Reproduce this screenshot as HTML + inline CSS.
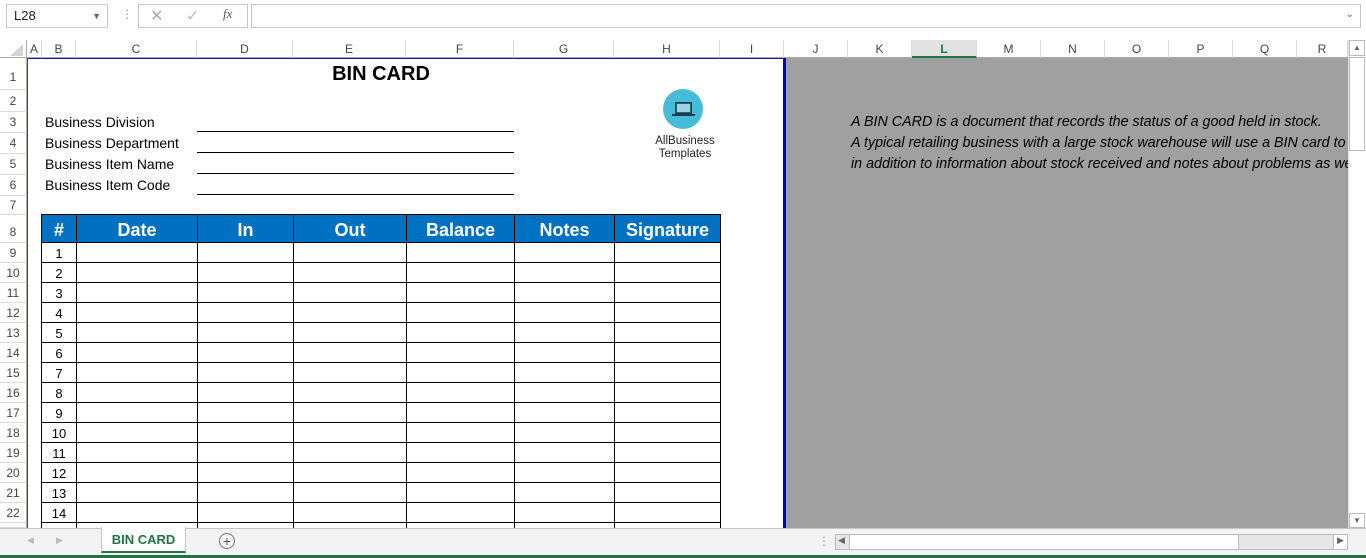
<!DOCTYPE html>
<html><head><meta charset="utf-8"><style>
*{margin:0;padding:0;box-sizing:border-box}
body{width:1366px;height:558px;overflow:hidden;background:#fff;font-family:"Liberation Sans",Calibri,sans-serif;position:relative}
.a{position:absolute}
.ch{position:absolute;top:40px;height:18px;border-right:1px solid #dadada;font-size:12px;color:#444;text-align:center;line-height:18px;background:#fff;border-bottom:1px solid #ababab}
.rh{position:absolute;left:0;width:27px;border-bottom:1px solid #dadada;font-size:12px;color:#444;text-align:center;background:#fff;border-right:1px solid #ababab}
table.g{position:absolute;left:41px;top:214px;border-collapse:collapse;table-layout:fixed}
table.g td{border:1px solid #000;height:20px;font-size:13px;text-align:center;color:#000;padding:2px 0 0 0;line-height:17px}
table.g tr.h td{background:#0070c0;color:#fff;font-weight:bold;font-size:18px;height:28px;padding-top:3px}
.lab{position:absolute;left:45px;font-size:14px;color:#000}
.ul{position:absolute;left:197px;width:317px;height:1px;background:#000}
.it{position:absolute;left:851px;font-size:14.3px;font-style:italic;color:#000;white-space:nowrap}
</style></head><body>
<div class="a" style="left:0;top:0;width:1366px;height:36px;background:#fff"></div>
<div class="a" style="left:6px;top:4px;width:102px;height:24px;border:1px solid #c6c6c6;font-size:13px;line-height:22px;padding-left:7px;color:#222">L28<span class="a" style="right:6px;top:0;font-size:9px;color:#666">▼</span></div>
<div class="a" style="left:121px;top:7px;color:#999;font-size:12px">⋮</div>
<div class="a" style="left:138px;top:4px;width:110px;height:24px;border:1px solid #c6c6c6"></div>
<div class="a" style="left:150px;top:6px;color:#aaa;font-size:16px">✕</div>
<div class="a" style="left:186px;top:6px;color:#bbb;font-size:16px">✓</div>
<div class="a" style="left:223px;top:6px;color:#555;font-size:13px;font-style:italic;font-family:'Liberation Serif',serif">fx</div>
<div class="a" style="left:251px;top:4px;width:1110px;height:24px;border:1px solid #c6c6c6"><span class="a" style="right:6px;top:4px;font-size:10px;color:#666">⌄</span></div>
<div class="a" style="left:0;top:40px;width:27px;height:18px;background:#fff;border-right:1px solid #ababab;border-bottom:1px solid #ababab"></div>
<div class="a" style="left:10px;top:44px;width:0;height:0;border-left:13px solid transparent;border-bottom:12px solid #d4d4d4"></div>
<div class="ch" style="left:27px;width:15px">A</div>
<div class="ch" style="left:42px;width:34px">B</div>
<div class="ch" style="left:76px;width:121px">C</div>
<div class="ch" style="left:197px;width:96px">D</div>
<div class="ch" style="left:293px;width:113px">E</div>
<div class="ch" style="left:406px;width:108px">F</div>
<div class="ch" style="left:514px;width:100px">G</div>
<div class="ch" style="left:614px;width:106px">H</div>
<div class="ch" style="left:720px;width:64px">I</div>
<div class="ch" style="left:784px;width:64px">J</div>
<div class="ch" style="left:848px;width:64px">K</div>
<div class="ch" style="left:912px;width:65px;background:#e1e1e1;color:#217346;font-weight:bold;border-bottom:2px solid #217346">L</div>
<div class="ch" style="left:977px;width:64px">M</div>
<div class="ch" style="left:1041px;width:64px">N</div>
<div class="ch" style="left:1105px;width:64px">O</div>
<div class="ch" style="left:1169px;width:64px">P</div>
<div class="ch" style="left:1233px;width:64px">Q</div>
<div class="ch" style="left:1297px;width:51px">R</div>
<div class="rh" style="top:58px;height:32px;line-height:38px">1</div>
<div class="rh" style="top:90px;height:22px;line-height:22px">2</div>
<div class="rh" style="top:112px;height:21px;line-height:21px">3</div>
<div class="rh" style="top:133px;height:21px;line-height:21px">4</div>
<div class="rh" style="top:154px;height:21px;line-height:21px">5</div>
<div class="rh" style="top:175px;height:21px;line-height:21px">6</div>
<div class="rh" style="top:196px;height:19px;line-height:19px">7</div>
<div class="rh" style="top:215px;height:28px;line-height:34px">8</div>
<div class="rh" style="top:243px;height:20px;line-height:20px">9</div>
<div class="rh" style="top:263px;height:20px;line-height:20px">10</div>
<div class="rh" style="top:283px;height:20px;line-height:20px">11</div>
<div class="rh" style="top:303px;height:20px;line-height:20px">12</div>
<div class="rh" style="top:323px;height:20px;line-height:20px">13</div>
<div class="rh" style="top:343px;height:20px;line-height:20px">14</div>
<div class="rh" style="top:363px;height:20px;line-height:20px">15</div>
<div class="rh" style="top:383px;height:20px;line-height:20px">16</div>
<div class="rh" style="top:403px;height:20px;line-height:20px">17</div>
<div class="rh" style="top:423px;height:20px;line-height:20px">18</div>
<div class="rh" style="top:443px;height:20px;line-height:20px">19</div>
<div class="rh" style="top:463px;height:20px;line-height:20px">20</div>
<div class="rh" style="top:483px;height:20px;line-height:20px">21</div>
<div class="rh" style="top:503px;height:20px;line-height:20px">22</div>
<div class="rh" style="top:523px;height:5px"></div>
<div class="a" style="left:27px;top:58px;width:758px;height:1px;background:#1a1aa0"></div>
<div class="a" style="left:27px;top:58px;width:1px;height:470px;background:#3a3ab8"></div>
<div class="a" style="left:783px;top:58px;width:3px;height:470px;background:#0000c8"></div>
<div class="a" style="left:786px;top:58px;width:562px;height:470px;background:#a0a0a0"></div>
<div class="a" style="left:293px;top:63px;width:176px;text-align:center;font-size:20px;font-weight:bold">BIN CARD</div>
<div class="lab" style="top:114px">Business Division</div>
<div class="lab" style="top:135px">Business Department</div>
<div class="lab" style="top:156px">Business Item Name</div>
<div class="lab" style="top:177px">Business Item Code</div>
<div class="ul" style="top:131px"></div>
<div class="ul" style="top:152px"></div>
<div class="ul" style="top:173px"></div>
<div class="ul" style="top:194px"></div>
<div class="a" style="left:663px;top:89px;width:40px;height:40px;border-radius:50%;background:#47bcd8;overflow:hidden">
<div class="a" style="left:12px;top:13px;width:17px;height:12px;background:#2b5d78;border:1px solid #1d3d52"></div>
<div class="a" style="left:14px;top:15px;width:13px;height:8px;background:#9bd3e4"></div>
<div class="a" style="left:9px;top:25px;width:23px;height:2px;background:#1d3d52"></div>
</div>
<div class="a" style="left:640px;top:135px;width:90px;text-align:center;font-size:11.5px;line-height:13px;color:#222">AllBusiness<br>Templates</div>
<div class="a" style="left:0;top:0;width:1366px;height:528px;overflow:hidden;pointer-events:none">
<table class="g">
<colgroup><col style="width:35px"><col style="width:121px"><col style="width:96px"><col style="width:113px"><col style="width:108px"><col style="width:100px"><col style="width:106px"></colgroup>
<tr class="h"><td>#</td><td>Date</td><td>In</td><td>Out</td><td>Balance</td><td>Notes</td><td>Signature</td></tr>
<tr><td>1</td><td></td><td></td><td></td><td></td><td></td><td></td></tr>
<tr><td>2</td><td></td><td></td><td></td><td></td><td></td><td></td></tr>
<tr><td>3</td><td></td><td></td><td></td><td></td><td></td><td></td></tr>
<tr><td>4</td><td></td><td></td><td></td><td></td><td></td><td></td></tr>
<tr><td>5</td><td></td><td></td><td></td><td></td><td></td><td></td></tr>
<tr><td>6</td><td></td><td></td><td></td><td></td><td></td><td></td></tr>
<tr><td>7</td><td></td><td></td><td></td><td></td><td></td><td></td></tr>
<tr><td>8</td><td></td><td></td><td></td><td></td><td></td><td></td></tr>
<tr><td>9</td><td></td><td></td><td></td><td></td><td></td><td></td></tr>
<tr><td>10</td><td></td><td></td><td></td><td></td><td></td><td></td></tr>
<tr><td>11</td><td></td><td></td><td></td><td></td><td></td><td></td></tr>
<tr><td>12</td><td></td><td></td><td></td><td></td><td></td><td></td></tr>
<tr><td>13</td><td></td><td></td><td></td><td></td><td></td><td></td></tr>
<tr><td>14</td><td></td><td></td><td></td><td></td><td></td><td></td></tr>
<tr><td>15</td><td></td><td></td><td></td><td></td><td></td><td></td></tr>
</table>
</div>
<div class="a" style="left:786px;top:58px;width:562px;height:470px;overflow:hidden">
<div class="it" style="left:65px;top:56px">A BIN CARD is a document that records the status of a good held in stock.</div>
<div class="it" style="left:65px;top:77px">A typical retailing business with a large stock warehouse will use a BIN card to record</div>
<div class="it" style="left:65px;top:98px">in addition to information about stock received and notes about problems as well.</div>
</div>
<div class="a" style="left:1348px;top:40px;width:18px;height:488px;background:#fff;border-left:1px solid #e0e0e0"></div>
<div class="a" style="left:1349px;top:40px;width:16px;height:16px;border:1px solid #bbb;font-size:8px;color:#666;text-align:center;line-height:14px">▲</div>
<div class="a" style="left:1349px;top:57px;width:16px;height:94px;border:1px solid #bbb;background:#fff"></div>
<div class="a" style="left:1349px;top:513px;width:16px;height:15px;border:1px solid #bbb;font-size:8px;color:#666;text-align:center;line-height:13px">▼</div>
<div class="a" style="left:0;top:528px;width:1366px;height:27px;background:#f3f3f3;border-top:1px solid #c6c6c6"></div>
<div class="a" style="left:27px;top:535px;font-size:9px;color:#bbb">◀</div>
<div class="a" style="left:56px;top:535px;font-size:9px;color:#bbb">▶</div>
<div class="a" style="left:101px;top:527px;width:85px;height:26px;background:#fff;border:1px solid #c6c6c6;border-top:none;border-bottom:2px solid #217346;text-align:center;font-size:13px;font-weight:bold;color:#217346;line-height:26px">BIN CARD</div>
<div class="a" style="left:219px;top:533px;width:16px;height:16px;border:1px solid #777;border-radius:50%;text-align:center;line-height:14px;font-size:14px;color:#555">+</div>
<div class="a" style="left:818px;top:534px;color:#999;font-size:12px">⋮</div>
<div class="a" style="left:835px;top:534px;width:513px;height:16px;background:#e6e6e6;border:1px solid #bbb"></div>
<div class="a" style="left:849px;top:535px;width:390px;height:14px;background:#fff;border-right:1px solid #bbb;border-left:1px solid #bbb"></div>
<div class="a" style="left:838px;top:535px;font-size:9px;color:#666">◀</div>
<div class="a" style="left:1333px;top:535px;width:14px;height:14px;background:#fff;border-left:1px solid #bbb;font-size:9px;color:#666;text-align:center">▶</div>
<div class="a" style="left:0;top:555px;width:1366px;height:3px;background:#217346"></div>
</body></html>
